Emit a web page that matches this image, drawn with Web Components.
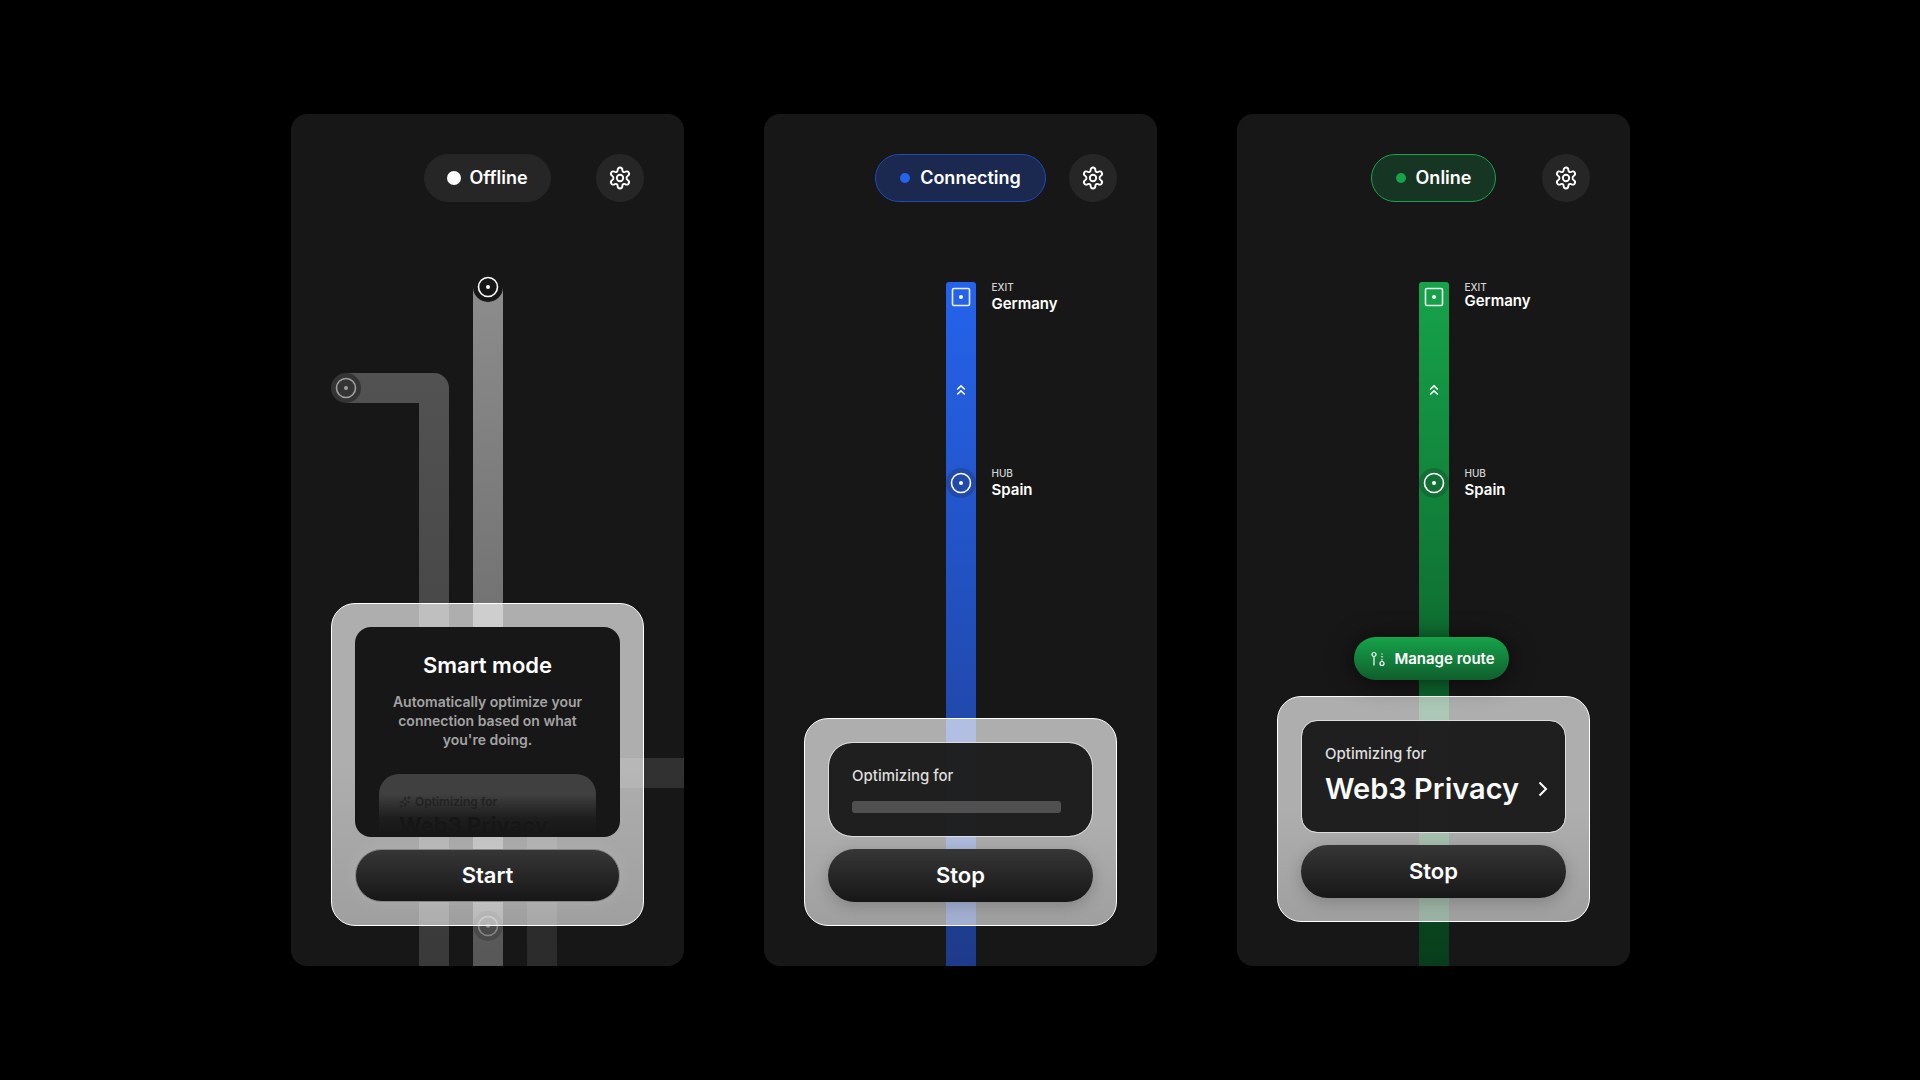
<!DOCTYPE html>
<html lang="en">
<head>
<meta charset="utf-8">
<title>Connection states</title>
<style>
  body { margin: 0; background: #000; color: #fff; font-family: Inter, "Liberation Sans", sans-serif; font-weight: 600; }
</style>
</head>
<body>
<vpn-board>
  <vpn-screen tone="offline">
    <status-pill slot="status">Offline</status-pill>
    <route-map slot="map" kind="idle"></route-map>
    <dock-card slot="dock">
      <mode-intro></mode-intro>
      <pill-button tone="start">Start</pill-button>
    </dock-card>
  </vpn-screen>
  <vpn-screen tone="connecting">
    <status-pill slot="status">Connecting</status-pill>
    <route-map slot="map" kind="live"></route-map>
    <route-stop slot="stops" kind="Exit" spaced>Germany</route-stop>
    <route-stop slot="stops" kind="Hub" spaced>Spain</route-stop>
    <dock-card slot="dock">
      <mode-panel loading></mode-panel>
      <pill-button>Stop</pill-button>
    </dock-card>
  </vpn-screen>
  <vpn-screen tone="online">
    <status-pill slot="status">Online</status-pill>
    <route-map slot="map" kind="live"></route-map>
    <route-stop slot="stops" kind="Exit">Germany</route-stop>
    <route-stop slot="stops" kind="Hub" spaced>Spain</route-stop>
    <route-button slot="dock">Manage route</route-button>
    <dock-card slot="dock">
      <mode-panel>Web3 Privacy</mode-panel>
      <pill-button>Stop</pill-button>
    </dock-card>
  </vpn-screen>
</vpn-board>

<script>
const define = (name, html) => {
  const template = document.createElement('template');
  template.innerHTML = '<style>:host,*{box-sizing:border-box}button{font:inherit;color:inherit;border:0;padding:0;cursor:pointer}</style>' + html;
  customElements.define(name, class extends HTMLElement {
    constructor() {
      super();
      this.attachShadow({ mode: 'open' }).append(template.content.cloneNode(true));
    }
    connectedCallback() {
      const kind = this.shadowRoot.querySelector('[data-kind]');
      if (kind) kind.textContent = this.getAttribute('kind').toUpperCase();
    }
  });
};

define('vpn-board', `
<style>
  :host { display: flex; justify-content: center; align-items: center; gap: 80px; min-height: 100vh; padding: 40px 0 40px 1px; }
  ::slotted(*) { flex: 0 1 393px; }
</style>
<slot></slot>`);

define('vpn-screen', `
<style>
  :host { position: relative; display: flex; flex-direction: column; min-width: 340px; min-height: 852px; padding: 40px; border-radius: 16px; background: #171717; overflow: hidden; }
  :host([tone=offline]) { --dot: #fff; --dot-size: 14px; --dot-gap: 8px; --pill-pad: 22px; --pill: #262626; --pill-line: #262626; }
  :host([tone=connecting]) { --dot: #2563eb; --pill: #1b2850; --pill-line: #1e4bb5; --line-a: #2563eb; --line-b: #1e3a8a; }
  :host([tone=online]) { --dot: #16a34a; --pill: #173523; --pill-line: #16a34a; --line-a: #16a34a; --line-b: #083d1b; padding-bottom: 44px; }
  header { display: grid; grid-template-columns: 1fr auto 1fr; align-items: center; }
  header ::slotted(*) { grid-column: 2; }
  button { justify-self: end; grid-column: 3; width: 48px; height: 48px; border-radius: 50%; background: #262626; display: grid; place-items: center; }
  .stops { display: flex; flex-direction: column; gap: 154px; margin: 80px 0 0 calc(50% + 31px); }
  .dock { position: relative; margin-top: auto; display: flex; flex-direction: column; align-items: stretch; gap: 16px; }
  ::slotted(*) { position: relative; }
</style>
<slot name="map"></slot>
<header>
  <slot name="status"></slot>
  <button aria-label="Settings"><svg width="24" height="24" viewBox="0 0 24 24" fill="none" stroke="#fff" stroke-width="1.9" stroke-linejoin="round"><circle cx="12" cy="12" r="3.2"/><path d="M9.600 4.200c0-3.600 4.800-3.600 4.800 0 0 1.600 1.300 2.400 2.800 1.600 3.100-1.800 5.500 2.400 2.400 4.200-1.400.8-1.400 3.200 0 4 3.100 1.800.7 6-2.400 4.200-1.500-.8-2.800 0-2.800 1.600 0 3.600-4.800 3.600-4.800 0 0-1.600-1.300-2.400-2.800-1.600-3.100 1.800-5.500-2.400-2.400-4.200 1.400-.8 1.400-3.200 0-4-3.100-1.800-.7-6 2.400-4.200 1.500.8 2.800 0 2.800-1.600z"/></svg></button>
</header>
<div class="stops"><slot name="stops"></slot></div>
<div class="dock"><slot name="dock"></slot></div>`);

define('status-pill', `
<style>
  :host { display: flex; align-items: center; gap: var(--dot-gap, 10px); height: 48px; padding: 0 var(--pill-pad, 24px); border: 1px solid var(--pill-line); border-radius: 24px; background: var(--pill); font-size: 18px; line-height: 24px; }
  i { width: var(--dot-size, 10px); height: var(--dot-size, 10px); border-radius: 50%; background: var(--dot); }
</style>
<i></i><slot></slot>`);

define('route-stop', `
<style>
  :host { display: flex; flex-direction: column; height: 32px; white-space: nowrap; }
  small { font-size: 10px; line-height: 11px; color: #d4d4d4; font-weight: 500; }
  b { font-size: 15px; line-height: 16px; font-weight: 600; }
  :host([spaced]) { gap: 3px; }
</style>
<small data-kind></small><b><slot></slot></b>`);

define('route-map', `
<style>
  :host { position: absolute !important; inset: 0; }
  svg { display: none; width: 393px; height: 100%; position: absolute; left: calc(50% - 196px); margin-left: -1px; overflow: visible; fill: none; }
  :host([kind=idle]) .idle, :host([kind=live]) .live { display: block; }
  .a { stop-color: var(--line-a); } .b { stop-color: var(--line-b); }
</style>
<svg class="idle">
  <defs>
    <linearGradient id="m" gradientUnits="userSpaceOnUse" x1="0" y1="173" x2="0" y2="852"><stop stop-color="#8c8c8c"/><stop offset="1" stop-color="#575757"/></linearGradient>
    <linearGradient id="l" gradientUnits="userSpaceOnUse" x1="0" y1="259" x2="0" y2="852"><stop stop-color="#525252"/><stop offset="1" stop-color="#393939"/></linearGradient>
    <linearGradient id="r" gradientUnits="userSpaceOnUse" x1="0" y1="644" x2="0" y2="852"><stop stop-color="#313131"/><stop offset="1" stop-color="#2b2b2b"/></linearGradient>
  </defs>
  <path fill="url(#l)" d="M55 259h88a15 15 0 0 1 15 15v578h-30V289H55z"/>
  <path fill="url(#r)" d="M394 644H251a15 15 0 0 0-15 15v193h30V674h128z"/>
  <path fill="url(#m)" d="M182 173h30v679h-30z"/>
  <circle cx="197" cy="173" r="15" fill="#171717"/><circle cx="197" cy="173" r="9.500" stroke="#fff" stroke-width="1.600"/><circle cx="197" cy="173" r="2" fill="#fff"/>
  <circle cx="55" cy="274" r="15" fill="#343434"/><circle cx="55" cy="274" r="9.500" stroke="#a0a0a0" stroke-width="1.600"/><circle cx="55" cy="274" r="2" fill="#a0a0a0"/>
  <circle cx="197" cy="812" r="15" fill="#4a4a4a"/><circle cx="197" cy="812" r="9.500" stroke="#858585" stroke-width="1.600"/><circle cx="197" cy="812" r="2" fill="#858585"/>
</svg>
<svg class="live">
  <defs><linearGradient id="v" gradientUnits="userSpaceOnUse" x1="0" y1="168" x2="0" y2="852"><stop class="a"/><stop class="b" offset="1"/></linearGradient></defs>
  <path fill="url(#v)" d="M185 168h24a3 3 0 0 1 3 3v681h-30V171a3 3 0 0 1 3-3z"/>
  <rect x="188.500" y="174.500" width="17" height="17" rx="1.500" stroke="#fff" stroke-opacity=".9" stroke-width="1.600"/><circle cx="197" cy="183" r="2" fill="#fff"/>
  <path d="M193.200 275.500l3.800-3.600 3.800 3.600M193.200 280.500l3.800-3.600 3.800 3.600" stroke="#fff" stroke-width="1.500"/>
  <circle cx="197" cy="369" r="15" fill="#171717" fill-opacity=".2"/><circle cx="197" cy="369" r="9.500" stroke="#fff" stroke-width="1.600"/><circle cx="197" cy="369" r="2" fill="#fff"/>
</svg>`);

define('dock-card', `
<style>
  :host { display: flex; flex-direction: column; gap: 12px; padding: 23px; border: 1px solid #fff; border-radius: 24px; background: linear-gradient(rgba(255,255,255,.65) 50%, rgba(255,255,255,.59)) border-box; }
</style>
<slot></slot>`);

define('mode-intro', `
<style>
  :host { display: flex; flex-direction: column; align-items: center; height: 210px; padding: 24px 24px 0; border-radius: 16px; background: #171717; overflow: hidden; text-align: center; }
  h2 { margin: 0; font-size: 22px; line-height: 28px; font-weight: 600; }
  p { margin: 13px 0 25px; padding: 0 8px; font-size: 14px; line-height: 19px; color: #a3a3a3; }
  section { position: relative; align-self: stretch; padding: 20px; height: 90px; flex: none; border-radius: 20px; background: #404040; color: #262626; text-align: left; white-space: nowrap; }
  section::after { content: ""; position: absolute; inset: 0; background: linear-gradient(rgba(23,23,23,0) 20px, rgba(23,23,23,.85) 44px, #171717 60px); }
  small { display: flex; align-items: center; gap: 4px; font-size: 12px; line-height: 16px; }
  strong { display: block; margin-top: 3px; font-size: 22px; line-height: 24px; font-weight: 700; color: #0d0d0d; }
</style>
<h2>Smart mode</h2>
<p>Automatically optimize your connection based on what you're doing.</p>
<section>
  <small><svg width="12" height="12" viewBox="0 0 24 24" fill="none" stroke="#262626" stroke-width="2" stroke-linejoin="round" stroke-linecap="round"><path d="M12 3c1 6.500 2.500 8 9 9-6.500 1-8 2.500-9 9-1-6.500-2.500-8-9-9 6.500-1 8-2.500 9-9zM20 1v5M22.500 3.500h-5M4 18v4M6 20H2"/></svg>Optimizing for</small>
  <strong>Web3 Privacy</strong>
</section>`);

define('mode-panel', `
<style>
  :host { display: flex; flex-direction: column; gap: 4px; padding: 23px 23px 22px; border: 1px solid #ddd; border-radius: 16px; background: rgba(23,23,23,.95) padding-box; color: #fafafa; white-space: nowrap; }
  small { font-size: 15px; line-height: 20px; color: #dedede; font-weight: 500; }
  button { display: flex; align-items: center; justify-content: space-between; background: none; font-size: 29px; line-height: 42px; margin-right: -8px; }
  i { display: none; width: 209px; height: 12px; margin-top: 11px; border-radius: 3px; background: #505050; }
  :host([loading]) { border-radius: 24px; height: 95px; }
  :host([loading]) i { display: block; }
  :host([loading]) button { display: none; }
</style>
<small>Optimizing for</small>
<i></i>
<button><slot></slot><svg width="12" height="16" viewBox="0 0 12 16" fill="none" stroke="#fff" stroke-width="2"><path d="M1.500 1.500L8 8l-6.500 6.500"/></svg></button>`);

define('pill-button', `
<style>
  :host { display: flex; }
  button { flex: 1; height: 53px; padding-bottom: 2px; border-radius: 27px; background: linear-gradient(#363636, #171717); font-size: 22px; line-height: 28px; box-shadow: 0 4px 16px rgba(0,0,0,.2); }
  :host([tone=start]) button { border: 1px solid #858585; box-shadow: 0 0 16px rgba(255,255,255,.12); }
</style>
<button><slot></slot></button>`);

define('route-button', `
<style>
  :host { display: flex; justify-content: center; z-index: 1; padding-right: 4px; }
  button { display: flex; align-items: center; gap: 8px; height: 43px; padding: 0 14px 0 16px; border-radius: 22px; background: linear-gradient(#16a34a, #0f5f2c); font-size: 15px; line-height: 20px; box-shadow: 0 2px 24px rgba(0,0,0,.6); }
</style>
<button><svg width="16" height="16" viewBox="0 0 16 16" fill="none" stroke="#fff" stroke-width="1.200"><circle cx="4" cy="3.500" r="2"/><path d="M4 5.500V14.500"/><circle cx="12" cy="12.500" r="2"/><path d="M12 9.500V2.500" stroke-dasharray="1.500 1.500"/></svg><slot></slot></button>`);
</script>
</body>
</html>
